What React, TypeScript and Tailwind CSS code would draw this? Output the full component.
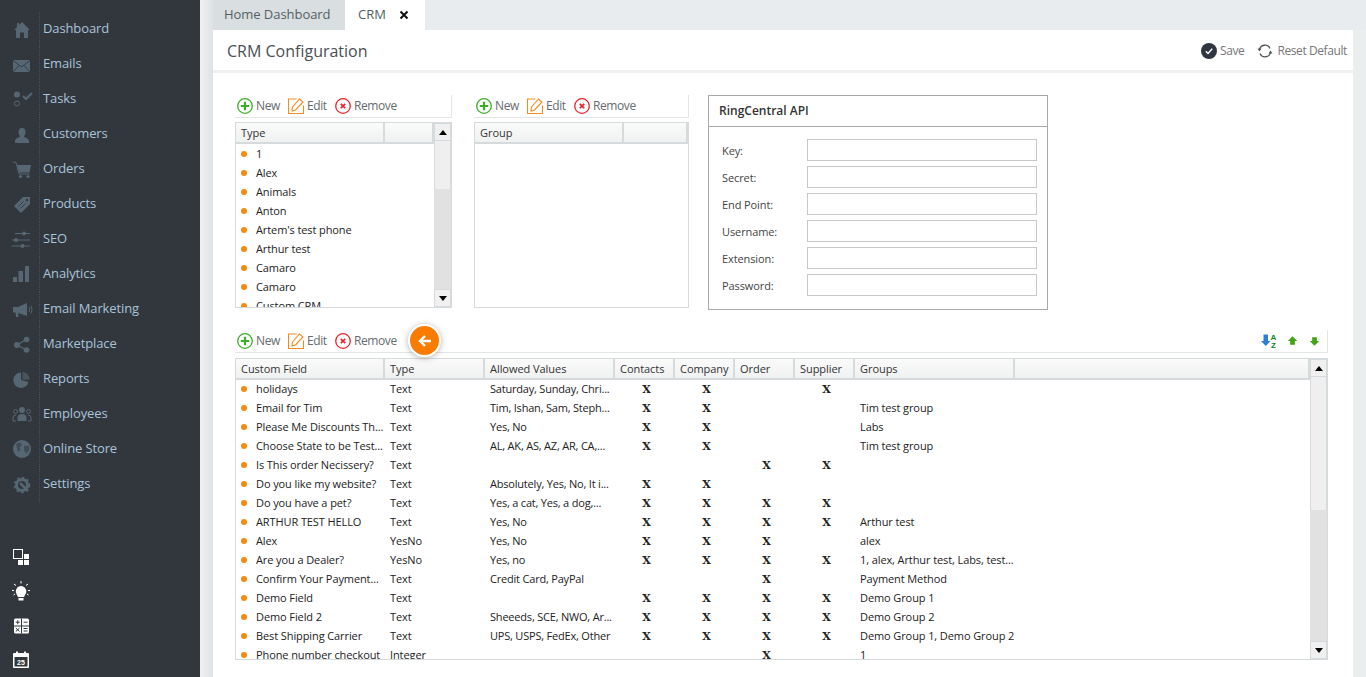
import React from "react";

const C = "#566672";

function S({ children }: { children: React.ReactNode }) {
  return <svg viewBox="0 0 24 24" className="w-6 h-6 shrink-0" fill={C}>{children}</svg>;
}

const navIcons: Record<string, React.ReactNode> = {
  Dashboard: <S><path d="M12 5 L20 13 L18 13 L18 21 L14 21 L14 15.500 L10 15.500 L10 21 L6 21 L6 13 L4 13 L7 10 L7 6 L9 6 L9 8 Z" /></S>,
  Emails: <S><rect x="3" y="8" width="17" height="12" /><path d="M3 8.500 L11.500 15 L20 8.500 M3 20 L9 13.500 M20 20 L14 13.500" stroke="#32373e" strokeWidth="0.9" fill="none" /></S>,
  Tasks: <S><circle cx="7" cy="7.500" r="3" /><circle cx="7" cy="16.500" r="2.500" fill="none" stroke={C} strokeWidth="1" /><path d="M13 9 L16 12 L22 6" fill="none" stroke={C} strokeWidth="2.200" /></S>,
  Customers: <S><path d="M12 6 C14.500 6 15.500 8 15.500 10 C15.500 12 14.500 13.500 14 14.500 C14 15.500 19 16 19 19 L19 21 L5 21 L5 19 C5 16 10 15.500 10 14.500 C9.500 13.500 8.500 12 8.500 10 C8.500 8 9.500 6 12 6 Z" /></S>,
  Orders: <S><path d="M3 5 L6 5.500 L9 17 L19.500 17" fill="none" stroke={C} strokeWidth="1" /><path d="M7 8 L21 8 L19.500 15.500 L9 15.500 Z" /><circle cx="10.500" cy="19.500" r="1.600" /><circle cx="18" cy="19.500" r="1.600" /></S>,
  Products: <S><path d="M20 5 L20 12 L11 21 L4 14 L13 5 Z" /><circle cx="17" cy="8" r="1.300" fill="#32373e" /><path d="M8.500 14.500 L13.500 9.500 M10.500 16.500 L15.500 11.500" stroke="#32373e" strokeWidth="0.9" /></S>,
  SEO: <S><path d="M5 6.500 H20 M2 13 H20 M2 19 H20" stroke={C} strokeWidth="1" /><circle cx="14" cy="6.500" r="2" /><circle cx="6" cy="13" r="2" /><circle cx="12.500" cy="19" r="2" /></S>,
  Analytics: <S><rect x="3" y="15" width="4" height="5" /><rect x="8.500" y="9" width="4.500" height="11" /><rect x="15" y="4" width="4" height="16" /></S>,
  "Email Marketing": <S><path d="M3 10 L8 10 L17 6 L17 19 L8 16 L8.500 20 L6 20 L5.500 15.500 L3 15.500 Z" /><path d="M19 10 Q20.500 12.500 19 15 M21 8.500 Q23 12.500 21 16.500" fill="none" stroke={C} strokeWidth="0.9" /></S>,
  Marketplace: <S><circle cx="7" cy="13" r="3" /><circle cx="16.500" cy="7.500" r="2.800" /><circle cx="16.500" cy="18" r="2.800" /><path d="M7 13 L16.500 7.500 M7 13 L16.500 18" stroke={C} strokeWidth="1.400" /></S>,
  Reports: <S><path d="M11 5.500 L11 13 L18.500 15 A7.700 7.700 0 1 1 11 5.500 Z" /><path d="M12.500 5 A7.500 7.500 0 0 1 19.500 12.500 L12.500 12.500 Z" opacity="0.65" /></S>,
  Employees: <S><circle cx="12" cy="8" r="3" /><path d="M7.500 19 L7.500 15 Q8 12 12 12 Q16 12 16.500 15 L16.500 19 Z" /><circle cx="5.500" cy="9.500" r="2" fill="none" stroke={C} /><circle cx="18.500" cy="9.500" r="2" fill="none" stroke={C} /><path d="M6 13 Q3 13 3 16 L3 19 L6 19 M18 13 Q21 13 21 16 L21 19 L18 19" fill="none" stroke={C} /></S>,
  "Online Store": <S><circle cx="12" cy="12" r="9" /><path d="M6 7 L10 5.500 L12 8 L9.500 10.500 L10.500 13 L8 15 Z M14 9 L19 8.500 L19.500 13 L16 17 L14 13 Z" fill="#32373e" opacity="0.55" /></S>,
  Settings: <S><circle cx="12" cy="13" r="5.500" fill="none" stroke={C} strokeWidth="3" /><circle cx="12" cy="13" r="7.500" fill="none" stroke={C} strokeWidth="1.500" strokeDasharray="2.500 2.500" /><path d="M10 11 L18 19" stroke={C} strokeWidth="2.500" /></S>,
};

const nav = ["Dashboard", "Emails", "Tasks", "Customers", "Orders", "Products", "SEO", "Analytics", "Email Marketing", "Marketplace", "Reports", "Employees", "Online Store", "Settings"];

function Sidebar() {
  return (
    <aside className="w-[200px] shrink-0 bg-[#32373e] flex flex-col">
      <nav className="pt-[11.5px]">
        {nav.map((n) => (
          <div key={n} className="h-[35px] flex items-center">
            <div className="w-[39px] h-full flex items-center pl-[10px] shrink-0">{navIcons[n]}</div>
            <div className="h-full flex items-center pl-[3px] border-l border-dotted border-[#4a5058] text-[13px] tracking-[-0.12px] text-[#a9c3d9]">{n}</div>
          </div>
        ))}
      </nav>
      <div className="mt-[38px] flex flex-col pl-[10px]">
        <div className="h-[34.5px] flex items-center">
          <svg viewBox="0 0 24 24" className="w-6 h-6"><rect x="3.500" y="4.500" width="9" height="9" fill="none" stroke="#fff" /><rect x="14" y="9" width="5" height="5" fill="#fff" /><rect x="8" y="15" width="5" height="5" fill="#fff" /><rect x="14" y="15" width="5" height="5" fill="#fff" /></svg>
        </div>
        <div className="h-[34.5px] flex items-center">
          <svg viewBox="0 0 24 24" className="w-6 h-6"><path d="M10.500 7 A5.500 5.500 0 0 1 15 16 L14 18 L8 18 L7 16 A5.500 5.500 0 0 1 10.500 7 Z" fill="#fff" /><rect x="8.500" y="19" width="5" height="2.500" fill="#fff" /><path d="M11 2 V4.500 M4 5 L6 6.500 M18 5 L16 6.500 M2 11.500 H4 M18 11.500 H20 M3.500 16 L5 15 M18.500 16 L17 15" stroke="#fff" /></svg>
        </div>
        <div className="h-[34.5px] flex items-center">
          <svg viewBox="0 0 24 24" className="w-6 h-6"><rect x="4" y="4.500" width="15" height="15" rx="1.500" fill="#fff" /><path d="M11.500 4.500 V19.500 M4 12 H19" stroke="#32373e" /><path d="M5.800 8.200 H9.700 M7.750 6.300 V10.200 M13.500 8.200 H17.500 M5.800 14 L9.500 17.500 M9.500 14 L5.800 17.500 M13.500 14.500 H17.500 M13.500 17 H17.500" stroke="#32373e" /></svg>
        </div>
        <div className="h-[34.5px] flex items-center">
          <svg viewBox="0 0 24 24" className="w-6 h-6"><rect x="3" y="5" width="16" height="15" rx="1" fill="#fff" /><rect x="4.500" y="9" width="13" height="9.500" fill="#32373e" /><rect x="6" y="3.500" width="2" height="3.500" fill="#fff" /><rect x="14" y="3.500" width="2" height="3.500" fill="#fff" /><text x="11" y="17" textAnchor="middle" fontSize="7" fontWeight="700" fill="#fff" fontFamily="Liberation Sans, sans-serif">25</text></svg>
        </div>
      </div>
    </aside>
  );
}

function PlusIcon() {
  return <svg viewBox="0 0 16 16" className="w-4 h-4 shrink-0"><circle cx="8" cy="8" r="7.300" fill="#fff" stroke="#3cae25" strokeWidth="1.300" /><path d="M8 3.800 V12.200 M3.800 8 H12.200" stroke="#3cae25" strokeWidth="2.200" /></svg>;
}
function EditIcon() {
  return <svg viewBox="0 0 16 16" className="w-4 h-4 shrink-0"><path d="M8.500 1 H0.500 V15.500 H15.500 V7.500" fill="none" stroke="#f58a1f" strokeWidth="1.100" /><path d="M4.500 9 L11.500 1 L15 4 L7.500 12 L4 13 Z" fill="#fff" stroke="#f58a1f" strokeWidth="1.100" /></svg>;
}
function RemoveIcon() {
  return <svg viewBox="0 0 16 16" className="w-4 h-4 shrink-0"><circle cx="8" cy="8" r="7.300" fill="#fff" stroke="#e8242f" strokeWidth="1.300" /><path d="M5.800 5.800 L10.200 10.200 M10.200 5.800 L5.800 10.200" stroke="#e8242f" strokeWidth="1.700" /></svg>;
}

function Actions() {
  return (
    <div className="flex items-center pl-[2px] text-[12px] tracking-[-0.4px] text-[#666c70]">
      <PlusIcon /><span className="ml-[3px] w-[32px]">New</span>
      <EditIcon /><span className="ml-[3px] w-[28px]">Edit</span>
      <RemoveIcon /><span className="ml-[3px]">Remove</span>
    </div>
  );
}

function HeadCell({ w, children }: { w: string; children?: React.ReactNode }) {
  return (
    <div className={`${w} h-full shrink-0 flex items-center pl-[5px] pt-[2px] border-r-2 border-[#d5dbdc] bg-gradient-to-b from-[#fafafa] to-[#f0f1f1] text-[11px] tracking-[-0.05px] text-[#333]`}>{children}</div>
  );
}

function ScrollBar({ thumb }: { thumb: string }) {
  return (
    <div className="w-[17px] shrink-0 flex flex-col bg-[#e1e1e1] h-full">
      <div className="h-[18px] shrink-0 bg-[#f0f0f0] border border-[#d5dbdc] flex items-center justify-center"><div className="w-0 h-0 border-x-[4px] border-x-transparent border-b-[5px] border-b-black" /></div>
      <div className={`${thumb} shrink-0 bg-[#efefef] border-x border-[#d5dbdc]`} />
      <div className="flex-1" />
      <div className="h-[18px] shrink-0 bg-[#f0f0f0] border border-[#d5dbdc] flex items-center justify-center"><div className="w-0 h-0 border-x-[4px] border-x-transparent border-t-[5px] border-t-black" /></div>
    </div>
  );
}

function Dot() {
  return <span className="w-[6px] h-[6px] rounded-full bg-[#f58a10] shrink-0 mb-[2px]" />;
}

const types = ["1", "Alex", "Animals", "Anton", "Artem's test phone", "Arthur test", "Camaro", "Camaro", "Custom CRM"];

function SmallToolbar({ width }: { width: string }) {
  return (
    <div className={`${width} h-[23px] flex items-center border-r border-b border-[#e4e6e6]`}>
      <Actions />
    </div>
  );
}

function RingCentral() {
  const fields = ["Key:", "Secret:", "End Point:", "Username:", "Extension:", "Password:"];
  return (
    <div className="ml-[19px] w-[340px] h-[215px] border border-[#aaaaaa] shrink-0">
      <div className="h-[31px] border-b border-[#aaaaaa] flex items-center pl-[10px] text-[12px] font-semibold text-[#333]">RingCentral API</div>
      <div className="pt-[12px] pl-[13px] flex flex-col gap-[5px]">
        {fields.map((f) => (
          <div key={f} className="flex items-center h-[22px]">
            <span className="w-[85px] pt-[2px] text-[11px] tracking-[-0.1px] text-[#444]">{f}</span>
            <div className="w-[230px] h-[22px] border border-[#c8c8c8]" />
          </div>
        ))}
      </div>
    </div>
  );
}

type Row = [string, string, string, boolean, boolean, boolean, boolean, string];
const rows: Row[] = [
  ["holidays", "Text", "Saturday, Sunday, Chri...", true, true, false, true, ""],
  ["Email for Tim", "Text", "Tim, Ishan, Sam, Steph...", true, true, false, false, "Tim test group"],
  ["Please Me Discounts Th...", "Text", "Yes, No", true, true, false, false, "Labs"],
  ["Choose State to be Test...", "Text", "AL, AK, AS, AZ, AR, CA,...", true, true, false, false, "Tim test group"],
  ["Is This order Necissery?", "Text", "", false, false, true, true, ""],
  ["Do you like my website?", "Text", "Absolutely, Yes, No, It i...", true, true, false, false, ""],
  ["Do you have a pet?", "Text", "Yes, a cat, Yes, a dog,...", true, true, true, true, ""],
  ["ARTHUR TEST HELLO", "Text", "Yes, No", true, true, true, true, "Arthur test"],
  ["Alex", "YesNo", "Yes, No", true, true, true, false, "alex"],
  ["Are you a Dealer?", "YesNo", "Yes, no", true, true, true, true, "1, alex, Arthur test, Labs, test..."],
  ["Confirm Your Payment...", "Text", "Credit Card, PayPal", false, false, true, false, "Payment Method"],
  ["Demo Field", "Text", "", true, true, true, true, "Demo Group 1"],
  ["Demo Field 2", "Text", "Sheeeds, SCE, NWO, Ar...", true, true, true, true, "Demo Group 2"],
  ["Best Shipping Carrier", "Text", "UPS, USPS, FedEx, Other", true, true, true, true, "Demo Group 1, Demo Group 2"],
  ["Phone number checkout", "Integer", "", false, false, true, false, "1"],
];

function Mark({ on }: { on: boolean }) {
  return (
    <div className="w-[60px] shrink-0 text-center pl-[3px] pt-[2px] text-[11px] font-bold text-[#222] [font-family:'DejaVu_Serif',serif]">{on ? "X" : ""}</div>
  );
}

function FieldsTable() {
  return (
    <div className="w-[1093px] h-[302px] border border-[#d5dbdc] flex overflow-hidden">
      <div className="flex-1 min-w-0 flex flex-col overflow-hidden">
        <div className="h-[19px] shrink-0 flex border-b-2 border-[#d5dbdc] box-content">
          <HeadCell w="w-[149px]">Custom Field</HeadCell>
          <HeadCell w="w-[100px]">Type</HeadCell>
          <HeadCell w="w-[130px]">Allowed Values</HeadCell>
          <HeadCell w="w-[60px]">Contacts</HeadCell>
          <HeadCell w="w-[60px]">Company</HeadCell>
          <HeadCell w="w-[60px]">Order</HeadCell>
          <HeadCell w="w-[60px]">Supplier</HeadCell>
          <HeadCell w="w-[160px]">Groups</HeadCell>
          <HeadCell w="flex-1" />
        </div>
        <div className="text-[11px] tracking-[-0.1px] text-[#222]">
          {rows.map((r) => (
            <div key={r[0]} className="h-[19px] flex items-center">
              <div className="w-[149px] shrink-0 flex items-center pl-[5px] gap-[9px] whitespace-nowrap"><Dot /><span>{r[0]}</span></div>
              <div className="w-[100px] shrink-0 pl-[5px]">{r[1]}</div>
              <div className="w-[130px] shrink-0 pl-[5px] whitespace-nowrap tracking-[-0.2px]">{r[2]}</div>
              <Mark on={r[3]} /><Mark on={r[4]} /><Mark on={r[5]} /><Mark on={r[6]} />
              <div className="pl-[5px] whitespace-nowrap">{r[7]}</div>
            </div>
          ))}
        </div>
      </div>
      <ScrollBar thumb="h-[133px]" />
    </div>
  );
}

export default function App() {
  return (
    <div className="w-[1366px] h-[677px] flex overflow-hidden bg-[#ebeeef] [font-family:'Open_Sans',sans-serif]">
      <Sidebar />
      <div className="w-[13px] shrink-0 bg-gradient-to-r from-[#eef0f1] to-[#dfe2e4]" />
      <main className="w-[1140px] shrink-0 flex flex-col bg-white">
        <div className="h-[30px] shrink-0 flex items-stretch bg-[#e9ecee] -mr-[13px]">
          <div className="w-[132px] bg-[#d9dee0] flex items-center pl-[11px] text-[13px] tracking-[-0.05px] text-[#555e62]">Home Dashboard</div>
          <div className="w-[80px] bg-white flex items-center pl-[13px] text-[13px] text-[#555e62]">
            CRM
            <svg viewBox="0 0 10 10" className="w-[10px] h-[10px] ml-[13px]"><path d="M1.500 1.500 L8.500 8.500 M8.500 1.500 L1.500 8.500" stroke="#111" strokeWidth="2" /></svg>
          </div>
        </div>
        <header className="h-[43px] shrink-0 flex items-center justify-between border-b-[3px] border-[#eef0f0] pl-[14px] pr-[6px] pt-[1px]">
          <h1 className="text-[16px] font-normal text-[#4a5055]">CRM Configuration</h1>
          <div className="flex items-center text-[12px] tracking-[-0.4px] text-[#777]">
            <svg viewBox="0 0 16 16" className="w-4 h-4"><circle cx="8" cy="8" r="8" fill="#2f3640" /><path d="M4.800 8.300 L7 10.500 L11.200 5.800" fill="none" stroke="#fff" strokeWidth="1.400" /></svg>
            <span className="ml-[3px]">Save</span>
            <svg viewBox="0 0 16 16" className="w-4 h-4 ml-[13px] mr-[1px]"><path d="M2.500 7 A5.500 5.500 0 0 1 13 5.500 M13.500 9 A5.500 5.500 0 0 1 3 10.500" fill="none" stroke="#555" strokeWidth="1.300" /><path d="M0.500 5.500 L4.500 5.500 L2.500 8.500 Z M11.500 10.500 L15.500 10.500 L13.500 7.500 Z" fill="#555" /></svg>
            <span className="ml-[3px]">Reset Default</span>
          </div>
        </header>
        <div className="pl-[22px] pt-[22px] flex flex-col">
          <div className="flex items-start">
            <div className="w-[217px] shrink-0">
              <SmallToolbar width="w-[217px]" />
              <div className="mt-[4px] h-[186px] border border-[#d5dbdc] flex overflow-hidden">
                <div className="flex-1 min-w-0 flex flex-col overflow-hidden">
                  <div className="h-[19px] shrink-0 flex border-b-2 border-[#d5dbdc] box-content">
                    <HeadCell w="w-[149px]">Type</HeadCell>
                    <HeadCell w="flex-1" />
                  </div>
                  <div className="pt-[1px] text-[11px] tracking-[-0.1px] text-[#222]">
                    {types.map((t, i) => (
                      <div key={i} className="h-[19px] flex items-center pl-[5px] gap-[9px]"><Dot /><span>{t}</span></div>
                    ))}
                  </div>
                </div>
                <ScrollBar thumb="h-[48px]" />
              </div>
            </div>
            <div className="ml-[22px] w-[215px] shrink-0">
              <SmallToolbar width="w-[215px]" />
              <div className="mt-[4px] h-[186px] border border-[#d5dbdc]">
                <div className="h-[19px] flex border-b-2 border-[#d5dbdc] box-content">
                  <HeadCell w="w-[149px]">Group</HeadCell>
                  <HeadCell w="flex-1" />
                </div>
              </div>
            </div>
            <RingCentral />
          </div>
          <div className="mt-[20px] w-[1093px] h-[23px] flex items-center justify-between border-b border-r border-[#e4e6e6]">
            <div className="relative">
              <Actions />
              <div className="absolute left-[173px] -top-[8px] w-[33px] h-[33px] rounded-full bg-[#f97c00] border-2 border-white shadow-[0_1px_6px_rgba(0,0,0,0.3)] flex items-center justify-center">
                <svg viewBox="0 0 16 16" className="w-4 h-4"><path d="M14 8 H3 M8 3 L3 8 L8 13" fill="none" stroke="#fff" strokeWidth="2.400" /></svg>
              </div>
            </div>
            <div className="flex items-center pr-[5px] gap-[7.5px]">
              <svg viewBox="0 0 16 16" className="w-4 h-4"><path d="M2.500 1.500 H7 V8 H9.500 L4.800 13 L0 8 H2.500 Z" fill="#2b7fd8" /><text x="12.500" y="7" textAnchor="middle" fontSize="8" fontWeight="700" fill="#0a8a16" fontFamily="Liberation Sans, sans-serif">A</text><text x="12.500" y="15" textAnchor="middle" fontSize="8" fontWeight="700" fill="#0a8a16" fontFamily="Liberation Sans, sans-serif">Z</text></svg>
              <svg viewBox="0 0 16 16" className="w-[15px] h-4"><path d="M8 3 L13 8 H10.500 V12 H5.500 V8 H3 Z" fill="#3fa513" /></svg>
              <svg viewBox="0 0 16 16" className="w-[15px] h-4"><path d="M8 13 L13 8 H10.500 V4 H5.500 V8 H3 Z" fill="#3fa513" /></svg>
            </div>
          </div>
          <div className="mt-[5px]"><FieldsTable /></div>
        </div>
      </main>
    </div>
  );
}
